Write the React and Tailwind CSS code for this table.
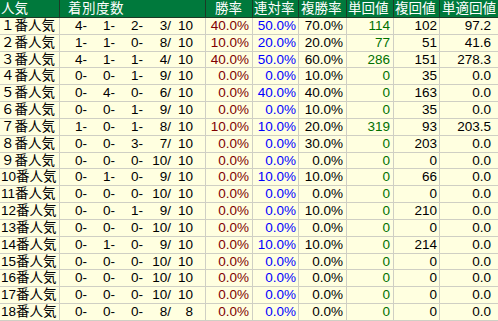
import React from 'react';

const rows = [
  ['１番人気', '4', '1', '2', '3', '10', '40.0%', '50.0%', '70.0%', '114', '102', '97.2'],
  ['２番人気', '1', '1', '0', '8', '10', '10.0%', '20.0%', '20.0%', '77', '51', '41.6'],
  ['３番人気', '4', '1', '1', '4', '10', '40.0%', '50.0%', '60.0%', '286', '151', '278.3'],
  ['４番人気', '0', '0', '1', '9', '10', '0.0%', '0.0%', '10.0%', '0', '35', '0.0'],
  ['５番人気', '0', '4', '0', '6', '10', '0.0%', '40.0%', '40.0%', '0', '163', '0.0'],
  ['６番人気', '0', '0', '1', '9', '10', '0.0%', '0.0%', '10.0%', '0', '35', '0.0'],
  ['７番人気', '1', '0', '1', '8', '10', '10.0%', '10.0%', '20.0%', '319', '93', '203.5'],
  ['８番人気', '0', '0', '3', '7', '10', '0.0%', '0.0%', '30.0%', '0', '203', '0.0'],
  ['９番人気', '0', '0', '0', '10', '10', '0.0%', '0.0%', '0.0%', '0', '0', '0.0'],
  ['10番人気', '0', '1', '0', '9', '10', '0.0%', '10.0%', '10.0%', '0', '66', '0.0'],
  ['11番人気', '0', '0', '0', '10', '10', '0.0%', '0.0%', '0.0%', '0', '0', '0.0'],
  ['12番人気', '0', '0', '1', '9', '10', '0.0%', '0.0%', '10.0%', '0', '210', '0.0'],
  ['13番人気', '0', '0', '0', '10', '10', '0.0%', '0.0%', '0.0%', '0', '0', '0.0'],
  ['14番人気', '0', '1', '0', '9', '10', '0.0%', '10.0%', '10.0%', '0', '214', '0.0'],
  ['15番人気', '0', '0', '0', '10', '10', '0.0%', '0.0%', '0.0%', '0', '0', '0.0'],
  ['16番人気', '0', '0', '0', '10', '10', '0.0%', '0.0%', '0.0%', '0', '0', '0.0'],
  ['17番人気', '0', '0', '0', '10', '10', '0.0%', '0.0%', '0.0%', '0', '0', '0.0'],
  ['18番人気', '0', '0', '0', '8', '8', '0.0%', '0.0%', '0.0%', '0', '0', '0.0'],
];

const App = () => {
  return (
    <div
      className="w-[498px] h-[321px] overflow-hidden flex flex-col bg-[#ffffe0] text-[13.5px] leading-[14px]"
      style={{ fontFamily: '"Liberation Sans", "Noto Sans CJK JP", sans-serif' }}
    >
      <div className="h-[18px] shrink-0 flex bg-[#00793c] text-white border-b border-[#1c3a26]">
        <div className="w-[60px] border-r border-[#1c3a26] flex items-center pl-px">人気</div>
        <div className="w-[146px] border-r border-[#1c3a26] flex items-center pl-[8px] tracking-[0.5px]">着別度数</div>
        <div className="w-[47px] border-r border-[#1c3a26] flex items-center pl-[9px]">勝率</div>
        <div className="w-[46px] border-r border-[#1c3a26] flex items-center pl-px">連対率</div>
        <div className="w-[48px] border-r border-[#1c3a26] flex items-center pl-[2px]">複勝率</div>
        <div className="w-[47px] border-r border-[#1c3a26] flex items-center pl-px">単回値</div>
        <div className="w-[46px] border-r border-[#1c3a26] flex items-center pl-px">複回値</div>
        <div className="w-[58px] flex items-center pl-[2px]">単適回値</div>
      </div>

      {rows.map((r) => (
        <div key={r[0]} className="flex-1 min-h-0 flex border-b border-[#cfcfc4] text-black">
          <div className="w-[60px] border-r border-[#cfcfc4] flex items-center pl-px">{r[0]}</div>
          <div className="w-[146px] border-r border-[#cfcfc4] flex items-center">
            <span className="w-[27px] text-right">{r[1]}-</span>
            <span className="w-[28px] text-right">{r[2]}-</span>
            <span className="w-[28px] text-right">{r[3]}-</span>
            <span className="w-[28px] text-right">{r[4]}/</span>
            <span className="w-[22px] text-right">{r[5]}</span>
          </div>
          <div className="w-[47px] border-r border-[#cfcfc4] flex items-center justify-end pr-[3px] text-[#800000]">{r[6]}</div>
          <div className="w-[46px] border-r border-[#cfcfc4] flex items-center justify-end pr-[2px] text-[#0000ff]">{r[7]}</div>
          <div className="w-[48px] border-r border-[#cfcfc4] flex items-center justify-end pr-[3px]">{r[8]}</div>
          <div className="w-[47px] border-r border-[#cfcfc4] flex items-center justify-end pr-[3px] text-[#007000]">{r[9]}</div>
          <div className="w-[46px] border-r border-[#cfcfc4] flex items-center justify-end pr-[2px]">{r[10]}</div>
          <div className="w-[58px] flex items-center justify-end pr-[7px]">{r[11]}</div>
        </div>
      ))}
    </div>
  );
};

export default App;
